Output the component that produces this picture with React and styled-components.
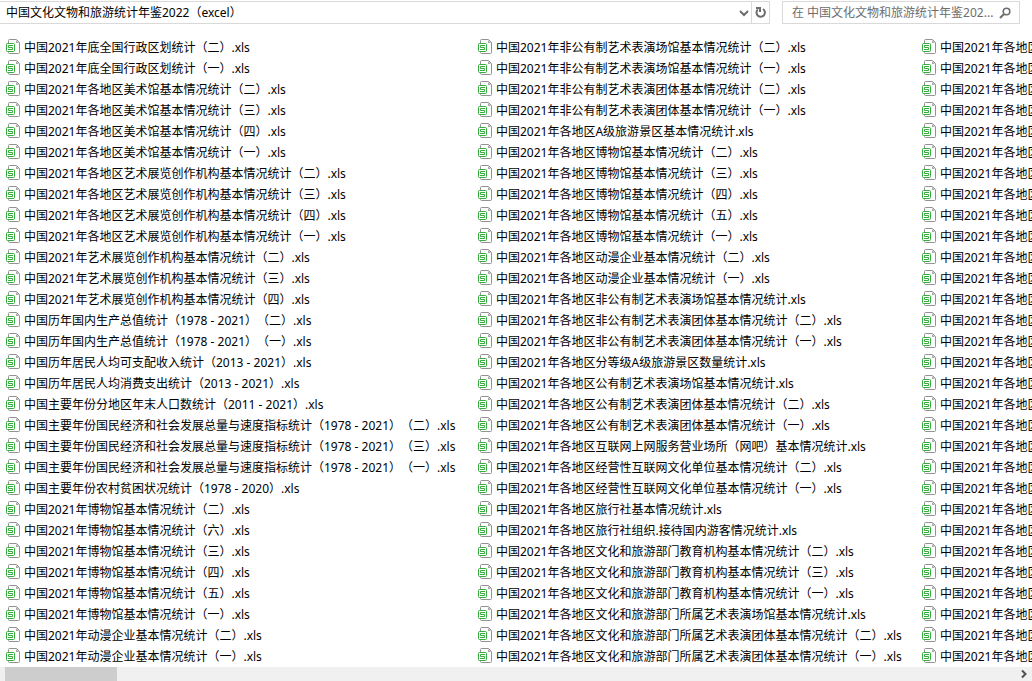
import React from "react";
import styled, { createGlobalStyle } from "styled-components";

const GlobalStyle = createGlobalStyle`
  * {
    box-sizing: border-box;
  }
  body {
    margin: 0;
    background: #fff;
    color: #000;
    font-family: "Noto Sans", "Noto Sans CJK SC", sans-serif;
    font-size: 12px;
    line-height: 21px;
    text-spacing-trim: space-all;
  }
`;

const Window = styled.main`
  display: flex;
  flex-direction: column;
  min-height: 100vh;
  overflow: hidden;
`;

const Toolbar = styled.header`
  display: flex;
  gap: 12px;
  padding: 1px 12px 0 0;
`;

const AddressBar = styled.div`
  display: flex;
  flex: 1;
  height: 23px;
  border: 1px solid #d9d9d9;
  border-left: 0;
`;

const Field = styled.input`
  flex: 1;
  min-width: 0;
  padding: 0 0 0 ${(props) => props.$indent};
  border: 0;
  outline: 0;
  background: transparent;
  color: #000;
  font: inherit;

  &::placeholder {
    color: #6d6d6d;
    opacity: 1;
  }
`;

const IconButton = styled.button`
  display: flex;
  align-items: center;
  justify-content: center;
  flex: none;
  width: ${(props) => props.$width};
  padding: 0;
  border: 0;
  border-left: ${(props) => (props.$divided ? "1px solid #d9d9d9" : "0")};
  background: transparent;
  color: #6d6d6d;
`;

const SearchBox = styled.form`
  display: flex;
  width: 238px;
  height: 23px;
  padding-right: 4px;
  border: 1px solid #d9d9d9;
`;

const FileList = styled.ul`
  display: grid;
  grid-auto-flow: column;
  grid-template-rows: repeat(30, 21px);
  grid-template-columns: 472px 444px max-content;
  margin: 0;
  padding: 13px 0 0 5px;
  list-style: none;
  overflow: hidden;
`;

const FileLink = styled.a`
  display: flex;
  align-items: center;
  gap: 4px;
  color: inherit;
  text-decoration: none;
  white-space: nowrap;
`;

const ScrollBar = styled.div`
  display: flex;
  justify-content: space-between;
  height: 14px;
  padding-left: 5px;
  background: #f0f0f0;
`;

const Thumb = styled.div`
  width: 112px;
  background: #cdcdcd;
`;

const leftFiles = [
  "中国2021年底全国行政区划统计（二）.xls",
  "中国2021年底全国行政区划统计（一）.xls",
  "中国2021年各地区美术馆基本情况统计（二）.xls",
  "中国2021年各地区美术馆基本情况统计（三）.xls",
  "中国2021年各地区美术馆基本情况统计（四）.xls",
  "中国2021年各地区美术馆基本情况统计（一）.xls",
  "中国2021年各地区艺术展览创作机构基本情况统计（二）.xls",
  "中国2021年各地区艺术展览创作机构基本情况统计（三）.xls",
  "中国2021年各地区艺术展览创作机构基本情况统计（四）.xls",
  "中国2021年各地区艺术展览创作机构基本情况统计（一）.xls",
  "中国2021年艺术展览创作机构基本情况统计（二）.xls",
  "中国2021年艺术展览创作机构基本情况统计（三）.xls",
  "中国2021年艺术展览创作机构基本情况统计（四）.xls",
  "中国历年国内生产总值统计（1978 - 2021）（二）.xls",
  "中国历年国内生产总值统计（1978 - 2021）（一）.xls",
  "中国历年居民人均可支配收入统计（2013 - 2021）.xls",
  "中国历年居民人均消费支出统计（2013 - 2021）.xls",
  "中国主要年份分地区年末人口数统计（2011 - 2021）.xls",
  "中国主要年份国民经济和社会发展总量与速度指标统计（1978 - 2021）（二）.xls",
  "中国主要年份国民经济和社会发展总量与速度指标统计（1978 - 2021）（三）.xls",
  "中国主要年份国民经济和社会发展总量与速度指标统计（1978 - 2021）（一）.xls",
  "中国主要年份农村贫困状况统计（1978 - 2020）.xls",
  "中国2021年博物馆基本情况统计（二）.xls",
  "中国2021年博物馆基本情况统计（六）.xls",
  "中国2021年博物馆基本情况统计（三）.xls",
  "中国2021年博物馆基本情况统计（四）.xls",
  "中国2021年博物馆基本情况统计（五）.xls",
  "中国2021年博物馆基本情况统计（一）.xls",
  "中国2021年动漫企业基本情况统计（二）.xls",
  "中国2021年动漫企业基本情况统计（一）.xls",
];

const middleFiles = [
  "中国2021年非公有制艺术表演场馆基本情况统计（二）.xls",
  "中国2021年非公有制艺术表演场馆基本情况统计（一）.xls",
  "中国2021年非公有制艺术表演团体基本情况统计（二）.xls",
  "中国2021年非公有制艺术表演团体基本情况统计（一）.xls",
  "中国2021年各地区A级旅游景区基本情况统计.xls",
  "中国2021年各地区博物馆基本情况统计（二）.xls",
  "中国2021年各地区博物馆基本情况统计（三）.xls",
  "中国2021年各地区博物馆基本情况统计（四）.xls",
  "中国2021年各地区博物馆基本情况统计（五）.xls",
  "中国2021年各地区博物馆基本情况统计（一）.xls",
  "中国2021年各地区动漫企业基本情况统计（二）.xls",
  "中国2021年各地区动漫企业基本情况统计（一）.xls",
  "中国2021年各地区非公有制艺术表演场馆基本情况统计.xls",
  "中国2021年各地区非公有制艺术表演团体基本情况统计（二）.xls",
  "中国2021年各地区非公有制艺术表演团体基本情况统计（一）.xls",
  "中国2021年各地区分等级A级旅游景区数量统计.xls",
  "中国2021年各地区公有制艺术表演场馆基本情况统计.xls",
  "中国2021年各地区公有制艺术表演团体基本情况统计（二）.xls",
  "中国2021年各地区公有制艺术表演团体基本情况统计（一）.xls",
  "中国2021年各地区互联网上网服务营业场所（网吧）基本情况统计.xls",
  "中国2021年各地区经营性互联网文化单位基本情况统计（二）.xls",
  "中国2021年各地区经营性互联网文化单位基本情况统计（一）.xls",
  "中国2021年各地区旅行社基本情况统计.xls",
  "中国2021年各地区旅行社组织.接待国内游客情况统计.xls",
  "中国2021年各地区文化和旅游部门教育机构基本情况统计（二）.xls",
  "中国2021年各地区文化和旅游部门教育机构基本情况统计（三）.xls",
  "中国2021年各地区文化和旅游部门教育机构基本情况统计（一）.xls",
  "中国2021年各地区文化和旅游部门所属艺术表演场馆基本情况统计.xls",
  "中国2021年各地区文化和旅游部门所属艺术表演团体基本情况统计（二）.xls",
  "中国2021年各地区文化和旅游部门所属艺术表演团体基本情况统计（一）.xls",
];

const rightFiles = Array(30).fill("中国2021年各地区");

const files = [...leftFiles, ...middleFiles, ...rightFiles];

const SheetIcon = () => (
  <svg width="15" height="17" viewBox="0 0 15 17" fill="none" aria-hidden="true">
    <path d="M3.5 4V1.5Q3.500 .5 4.500 .5H11.500L14.500 3.500V13.500Q14.500 14.500 13.500 14.500H4.500Q3.500 14.500 3.500 13.500V13" stroke="#929292" />
    <path d="M11 1V4H14Z" fill="#a8a8a8" />
    <rect x="1.500" y="4.500" width="8" height="8" rx="1" fill="#fff" stroke="#36ab3e" />
    <path d="M8 6.500H3.500V8.500H7.500V10.500H3" stroke="#36ab3e" />
  </svg>
);

const ChevronDown = () => (
  <svg width="10" height="10" viewBox="0 0 10 10" fill="none" aria-hidden="true">
    <path d="M1 3l4 4 4-4" stroke="currentColor" strokeWidth="2" />
  </svg>
);

const ChevronRight = () => (
  <svg width="8" height="10" viewBox="0 0 8 10" fill="none" aria-hidden="true">
    <path d="M2 1.500L5.500 5 2 8.500" stroke="#505050" strokeWidth="2" />
  </svg>
);

const RefreshIcon = () => (
  <svg width="13" height="13" viewBox="0 0 13 13" fill="none" aria-hidden="true">
    <path d="M9 3A4.200 4.200 0 1 1 3.800 3.500" stroke="currentColor" strokeWidth="2" />
    <path d="M2 2h4v4" stroke="currentColor" strokeWidth="2" />
  </svg>
);

const SearchIcon = () => (
  <svg width="12" height="12" viewBox="0 0 12 12" fill="none" aria-hidden="true">
    <circle cx="7.500" cy="4.500" r="3.300" stroke="currentColor" strokeWidth="1.600" />
    <path d="M5 7L1 11" stroke="currentColor" strokeWidth="2" />
  </svg>
);

export default function App() {
  return (
    <Window>
      <GlobalStyle />
      <Toolbar>
        <AddressBar>
          <Field
            aria-label="地址"
            $indent="6px"
            defaultValue="中国文化文物和旅游统计年鉴2022（excel）"
          />
          <IconButton type="button" aria-label="展开" $width="14px">
            <ChevronDown />
          </IconButton>
          <IconButton type="button" aria-label="刷新" $width="18px" $divided>
            <RefreshIcon />
          </IconButton>
        </AddressBar>
        <SearchBox>
          <Field
            aria-label="搜索"
            $indent="9px"
            placeholder="在 中国文化文物和旅游统计年鉴202..."
          />
          <IconButton type="submit" aria-label="搜索" $width="20px">
            <SearchIcon />
          </IconButton>
        </SearchBox>
      </Toolbar>
      <FileList>
        {files.map((name, index) => (
          <li key={index}>
            <FileLink href="#">
              <SheetIcon />
              {name}
            </FileLink>
          </li>
        ))}
      </FileList>
      <ScrollBar>
        <Thumb />
        <IconButton type="button" aria-label="向右滚动" $width="17px">
          <ChevronRight />
        </IconButton>
      </ScrollBar>
    </Window>
  );
}
